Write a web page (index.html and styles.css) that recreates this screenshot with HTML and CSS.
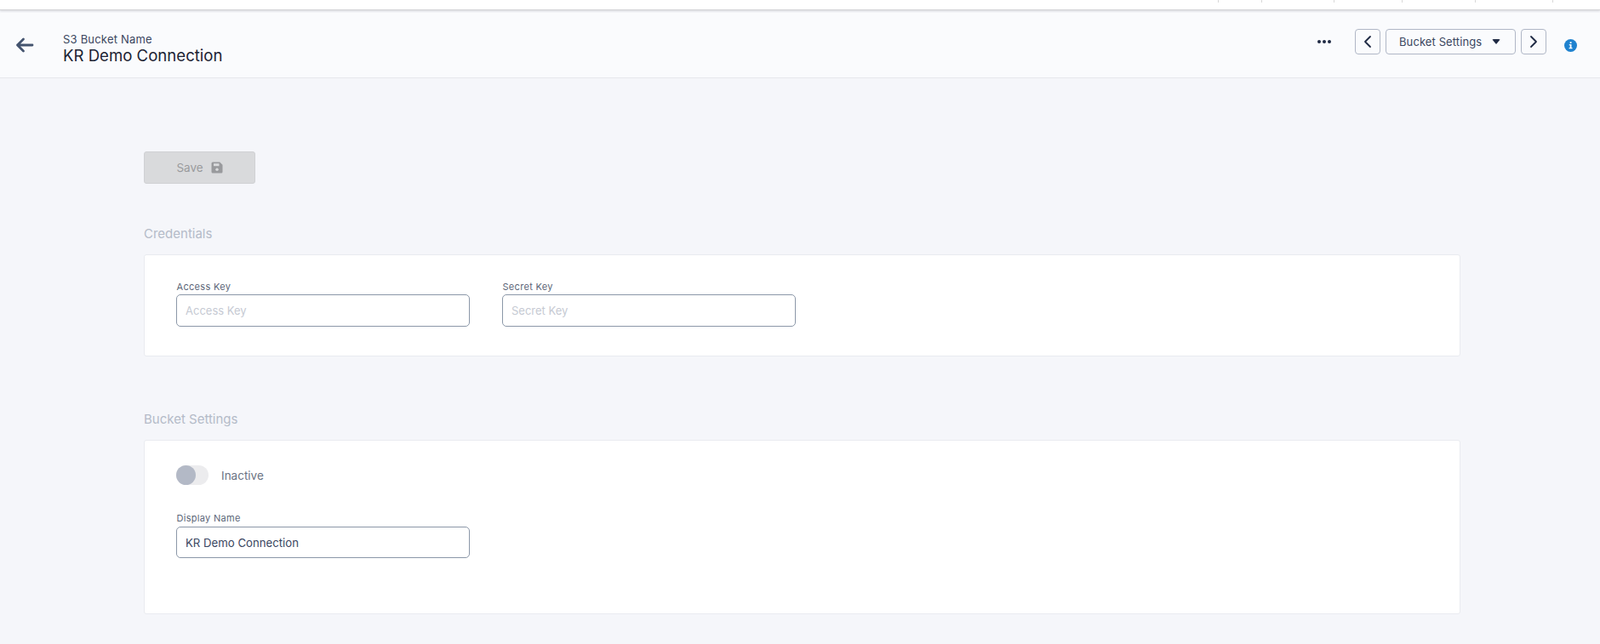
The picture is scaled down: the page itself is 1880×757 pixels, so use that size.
FILE: index.html
```html
<!DOCTYPE html>
<html lang="en">
<head>
  <meta charset="UTF-8" />
  <title>KR Demo Connection</title>
  <link rel="stylesheet" href="styles.css">
</head>
<body>
  <div class="topbar">
    <span class="tick"></span><span class="tick"></span><span class="tick"></span>
    <span class="tick"></span><span class="tick"></span><span class="tick"></span>
  </div>

  <header class="header">
    <svg class="back" width="22" height="18" viewBox="0 0 22 18" fill="none" stroke="#44546f" stroke-width="2.8" stroke-linecap="round" stroke-linejoin="round">
      <path d="M20 9H2.5M9.5 2L2.5 9l7 7"/>
    </svg>
    <div class="titles">
      <div class="subtitle">S3 Bucket Name</div>
      <div class="title">KR Demo Connection</div>
    </div>
    <div class="actions">
      <span class="dots"><i></i><i></i><i></i></span>
      <button class="nav-btn">
        <svg width="10" height="16" viewBox="0 0 10 16" fill="none" stroke="#1f2a44" stroke-width="1.8" stroke-linecap="round" stroke-linejoin="round"><path d="M8 2L2 8l6 6"/></svg>
      </button>
      <button class="select-btn">Bucket Settings <span class="caret"></span></button>
      <button class="nav-btn">
        <svg width="10" height="16" viewBox="0 0 10 16" fill="none" stroke="#1f2a44" stroke-width="1.8" stroke-linecap="round" stroke-linejoin="round"><path d="M2 2l6 6-6 6"/></svg>
      </button>
      <svg class="info" width="15" height="15" viewBox="0 0 15 15">
        <circle cx="7.5" cy="7.5" r="7.5" fill="#1f82cf"/>
        <rect x="6.7" y="3.2" width="1.8" height="1.8" fill="#fff"/>
        <path d="M5.8 6h2.7v4h1v1.2H5.6V10h1.1V7.2h-.9z" fill="#fff"/>
      </svg>
    </div>
  </header>

  <main class="content">
    <button class="save-btn" disabled>
      Save
      <svg width="14" height="14" viewBox="0 0 14 14"><path d="M2 .5h8.2L13.5 3.8V12a1.5 1.5 0 0 1-1.5 1.5H2A1.5 1.5 0 0 1 .5 12V2A1.5 1.5 0 0 1 2 .5z" fill="#999a9d"/><rect x="3" y="2.2" width="6.5" height="3" fill="#d9dadc"/><circle cx="7" cy="9.3" r="1.7" fill="#d9dadc"/></svg>
    </button>

    <h2 class="section-title first">Credentials</h2>
    <section class="card card-creds">
      <div class="field-row">
        <div class="field">
          <label>Access Key</label>
          <input type="text" placeholder="Access Key">
        </div>
        <div class="field">
          <label>Secret Key</label>
          <input type="text" placeholder="Secret Key">
        </div>
      </div>
    </section>

    <h2 class="section-title second">Bucket Settings</h2>
    <section class="card card-settings">
      <div class="toggle-row">
        <span class="toggle"><span class="knob"></span></span>
        <span class="toggle-label">Inactive</span>
      </div>
      <div class="field">
        <label>Display Name</label>
        <input type="text" value="KR Demo Connection">
      </div>
    </section>
  </main>
</body>
</html>
```

FILE: styles.css
```css
* {
  box-sizing: border-box;
}
body {
  margin: 0;
  height: 757px;
  overflow: hidden;
  background: #f5f6fa;
  font-family: Inter, "Liberation Sans", sans-serif;
  color: #2f3b52;
}
.topbar {
  height: 12px;
  background: #fff;
  border-bottom: 1px solid #d4d5d8;
  box-shadow: 0 1px 2px rgba(0,0,0,0.12);
  display: flex;
  justify-content: flex-end;
  padding-right: 55px;
}
.tick {
  width: 1px;
  height: 3px;
  background: #d8d8d8;
}
.tick:nth-child(1) { margin-right: 50px; }
.tick:nth-child(2) { margin-right: 84px; }
.tick:nth-child(3) { margin-right: 79px; }
.tick:nth-child(4) { margin-right: 85px; }
.tick:nth-child(5) { margin-right: 90px; }

.header {
  margin-top: 3px;
  height: 77px;
  background: #fafbfd;
  border-bottom: 1px solid #e6e8ec;
  display: flex;
  align-items: center;
  padding-left: 18px;
}
.back {
  margin-right: 34px;
  margin-top: -1px;
}
.titles {
  margin-top: 8px;
}
.subtitle {
  font-size: 13px;
  line-height: 16px;
  color: #3a4660;
  letter-spacing: 0.2px;
}
.title {
  font-size: 18.6px;
  line-height: 22px;
  color: #1c2333;
}
.actions {
  margin-left: auto;
  display: flex;
  align-items: center;
  padding-right: 27px;
}
.dots {
  display: flex;
  gap: 2px;
  margin-right: 28px;
  margin-top: -9px;
}
.dots i {
  width: 4px;
  height: 4px;
  border-radius: 50%;
  background: #1f2a44;
}
.nav-btn, .select-btn {
  height: 30px;
  background: #fafbfd;
  border: 1px solid #b0b7c6;
  border-radius: 4px;
  margin-top: -9px;
  font-family: inherit;
}
.nav-btn {
  width: 30px;
  padding: 0;
  display: flex;
  align-items: center;
  justify-content: center;
}
.select-btn {
  width: 153px;
  margin-left: 6px;
  margin-right: 6px;
  padding: 0 0 0 15px;
  display: flex;
  align-items: center;
  font-size: 13px;
  letter-spacing: 0.1px;
  color: #3a4660;
}
.caret {
  margin-left: 12px;
  margin-top: 1px;
  border-left: 5px solid transparent;
  border-right: 5px solid transparent;
  border-top: 6px solid #1f2a44;
  border-radius: 2px;
}
.info {
  margin-left: 21px;
}

.content {
  padding: 86px 164px 0 169px;
}
.save-btn {
  width: 131px;
  height: 38px;
  display: flex;
  align-items: center;
  justify-content: center;
  gap: 9px;
  background: #d9dadc;
  border: 1px solid #d0d1d4;
  border-radius: 3px;
  color: #999a9d;
  font-family: inherit;
  font-size: 13.5px;
  padding: 0;
}
.section-title {
  margin: 0;
  font-size: 15px;
  line-height: 18px;
  font-weight: 400;
  color: #b4bbc8;
}
.section-title.first {
  margin-top: 50px;
  margin-bottom: 15px;
}
.section-title.second {
  margin-top: 65px;
  margin-bottom: 15px;
}
.card {
  background: #fff;
  border: 1px solid #e9ebf0;
  border-radius: 3px;
  padding-left: 37px;
}
.card-creds {
  height: 120px;
  padding-top: 31px;
}
.card-settings {
  height: 205px;
  padding-top: 29px;
}
.field-row {
  display: flex;
  gap: 38px;
}
.field {
  width: 345px;
}
.field label {
  display: block;
  font-size: 11px;
  line-height: 13px;
  letter-spacing: 0.3px;
  color: #5c6678;
  margin-bottom: 2px;
  padding-left: 0.5px;
}
.field input {
  display: block;
  width: 345px;
  height: 38px;
  border: 1px solid #8b97a8;
  border-radius: 5px;
  padding: 0 10px;
  background: #fff;
  font-family: inherit;
  font-size: 13px;
  color: #3a4660;
  outline: none;
}
.card-settings .field label {
  margin-bottom: 3px;
}
.card-settings .field input {
  height: 37px;
  font-size: 13.2px;
}
.field input::placeholder {
  color: #c6cad3;
  opacity: 1;
}
.toggle-row {
  display: flex;
  align-items: center;
  margin-bottom: 33px;
}
.toggle {
  width: 38px;
  height: 23px;
  border-radius: 12px;
  background: #ececee;
  margin-right: 15px;
  display: block;
}
.knob {
  display: block;
  width: 23px;
  height: 23px;
  border-radius: 50%;
  background: #b3b9c6;
}
.toggle-label {
  font-size: 13.5px;
  color: #6b7484;
}
```
